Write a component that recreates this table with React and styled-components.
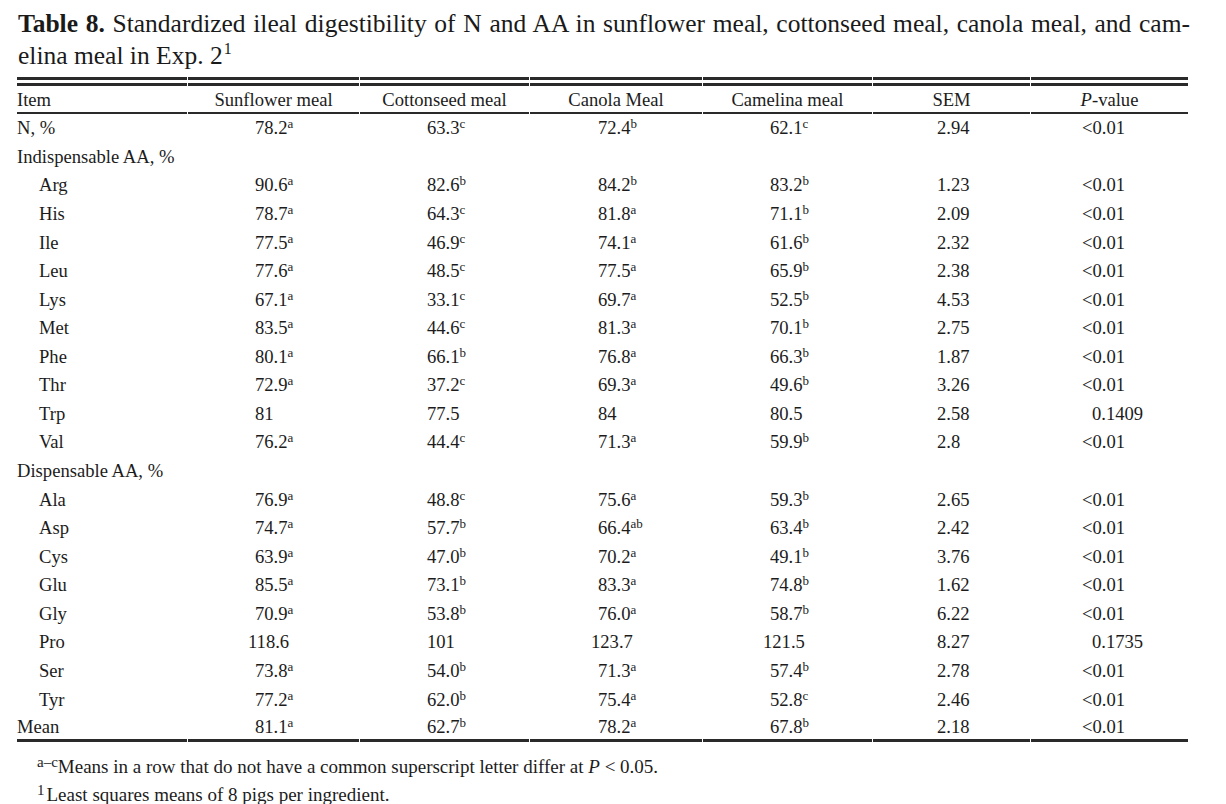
import React from 'react'
import styled, { createGlobalStyle } from 'styled-components'

const GlobalStyle = createGlobalStyle`
  body {
    margin: 0;
    background: #ffffff;
    font-family: "Liberation Serif", "Times New Roman", serif;
    color: #1c1c1c;
  }
`

const COLS = [170, 171, 169, 172, 169, 157, 157]
const PADS = [0, 67, 67, 68, 67, 64, 51]

const HEADERS = ['Item', 'Sunflower meal', 'Cottonseed meal', 'Canola Meal', 'Camelina meal', 'SEM']

const ROWS = [
    { label: 'N, %', values: ['78.2a', '63.3c', '72.4b', '62.1c', '2.94', '<0.01'] },
    { label: 'Indispensable AA, %', section: true },
    { label: 'Arg', sub: true, values: ['90.6a', '82.6b', '84.2b', '83.2b', '1.23', '<0.01'] },
    { label: 'His', sub: true, values: ['78.7a', '64.3c', '81.8a', '71.1b', '2.09', '<0.01'] },
    { label: 'Ile', sub: true, values: ['77.5a', '46.9c', '74.1a', '61.6b', '2.32', '<0.01'] },
    { label: 'Leu', sub: true, values: ['77.6a', '48.5c', '77.5a', '65.9b', '2.38', '<0.01'] },
    { label: 'Lys', sub: true, values: ['67.1a', '33.1c', '69.7a', '52.5b', '4.53', '<0.01'] },
    { label: 'Met', sub: true, values: ['83.5a', '44.6c', '81.3a', '70.1b', '2.75', '<0.01'] },
    { label: 'Phe', sub: true, values: ['80.1a', '66.1b', '76.8a', '66.3b', '1.87', '<0.01'] },
    { label: 'Thr', sub: true, values: ['72.9a', '37.2c', '69.3a', '49.6b', '3.26', '<0.01'] },
    { label: 'Trp', sub: true, values: ['81', '77.5', '84', '80.5', '2.58', '0.1409'] },
    { label: 'Val', sub: true, values: ['76.2a', '44.4c', '71.3a', '59.9b', '2.8', '<0.01'] },
    { label: 'Dispensable AA, %', section: true },
    { label: 'Ala', sub: true, values: ['76.9a', '48.8c', '75.6a', '59.3b', '2.65', '<0.01'] },
    { label: 'Asp', sub: true, values: ['74.7a', '57.7b', '66.4ab', '63.4b', '2.42', '<0.01'] },
    { label: 'Cys', sub: true, values: ['63.9a', '47.0b', '70.2a', '49.1b', '3.76', '<0.01'] },
    { label: 'Glu', sub: true, values: ['85.5a', '73.1b', '83.3a', '74.8b', '1.62', '<0.01'] },
    { label: 'Gly', sub: true, values: ['70.9a', '53.8b', '76.0a', '58.7b', '6.22', '<0.01'] },
    { label: 'Pro', sub: true, values: ['118.6', '101', '123.7', '121.5', '8.27', '0.1735'] },
    { label: 'Ser', sub: true, values: ['73.8a', '54.0b', '71.3a', '57.4b', '2.78', '<0.01'] },
    { label: 'Tyr', sub: true, values: ['77.2a', '62.0b', '75.4a', '52.8c', '2.46', '<0.01'] },
    { label: 'Mean', values: ['81.1a', '62.7b', '78.2a', '67.8b', '2.18', '<0.01'] },
]

function splitValue(v) {
    const m = v.match(/^([<\d.]+)([a-z]*)$/)
    return m ? [m[1], m[2]] : [v, '']
}

// three-digit means sit a little to the left, long p-values a little to the right
function shiftFor(num) {
    if (/^\d{3}\./.test(num)) return -7
    if (/^0\.\d{4}$/.test(num)) return 10
    return 0
}

function App() {
    return (
        <Page>
            <GlobalStyle />
            <Title>
                <TitleLine $justify>
                    <b>Table 8.</b> Standardized ileal digestibility of N and AA in sunflower meal, cottonseed meal, canola meal, and cam-
                </TitleLine>
                <TitleLine>
                    elina meal in Exp. 2<TitleSup>1</TitleSup>
                </TitleLine>
            </Title>

            <Table>
                <colgroup>
                    {COLS.map((w, i) => <col key={i} style={{ width: w }} />)}
                </colgroup>
                <thead>
                    <tr>
                        {HEADERS.map((h, i) => (
                            <Head key={h} $left={i === 0}>{h}</Head>
                        ))}
                        <Head><i>P</i>-value</Head>
                    </tr>
                </thead>
                <tbody>
                    {ROWS.map((row, r) => (
                        <Row key={row.label} $last={r === ROWS.length - 1}>
                            <Label $indent={row.sub}>{row.label}</Label>
                            {row.section
                                ? <Cell colSpan={6} />
                                : row.values.map((v, c) => {
                                    const [num, letters] = splitValue(v)
                                    return (
                                        <Cell key={c} $pad={PADS[c + 1] + shiftFor(num)}>
                                            {num}{letters && <Sup>{letters}</Sup>}
                                        </Cell>
                                    )
                                })}
                        </Row>
                    ))}
                </tbody>
            </Table>

            <Notes>
                <Note><NoteSup $gap={0}>a–c</NoteSup>Means in a row that do not have a common superscript letter differ at <i>P</i> &lt; 0.05.</Note>
                <Note><NoteSup $gap={2}>1</NoteSup>Least squares means of 8 pigs per ingredient.</Note>
            </Notes>
        </Page>
    )
}

export default App

const Page = styled.div`
    width: 1226px;
    height: 804px;
    box-sizing: border-box;
    padding: 8px 0 0 17px;
    overflow: hidden;
`

const Title = styled.div`
    width: 1172px;
    margin-left: 1px;
    font-size: 25.5px;
    line-height: 32px;
    color: #1a1a1a;
`

const TitleLine = styled.div`
    white-space: nowrap;
    text-align: ${props => props.$justify ? 'justify' : 'left'};
    text-align-last: ${props => props.$justify ? 'justify' : 'left'};

    b {
        font-weight: bold;
    }
`

const TitleSup = styled.sup`
    font-size: 16px;
    line-height: 0;
    vertical-align: 10px;
    margin-left: 1px;
`

const Table = styled.table`
    margin: 5px 0 0 -1px;
    table-layout: fixed;
    width: 1173px;
    border-collapse: separate;
    border-spacing: 1px 0;
    font-size: 18.6px;
`

const Head = styled.th`
    font-weight: normal;
    text-align: ${props => props.$left ? 'left' : 'center'};
    padding: 1px 0 0 0;
    height: 25px;
    white-space: nowrap;
    border-top: 9px double #2a2a2a;
    border-bottom: 2px solid #2a2a2a;
    line-height: 22px;

    i {
        font-style: italic;
    }
`

const Row = styled.tr`
    height: 28.57px;

    td {
        border-bottom: ${props => props.$last ? '3px solid #2a2a2a' : 'none'};
    }
`

const Label = styled.td`
    padding: 0 0 0 ${props => props.$indent ? '22px' : '0'};
    white-space: nowrap;
    line-height: 22px;
`

const Cell = styled.td`
    padding: 0 0 0 ${props => props.$pad || 0}px;
    white-space: nowrap;
    line-height: 22px;
`

const Sup = styled.sup`
    font-size: 13px;
    line-height: 0;
    vertical-align: 6px;
`

const Notes = styled.div`
    margin-top: 11px;
    padding-left: 20px;
    font-size: 19px;
    line-height: 28px;
`

const Note = styled.div`
    white-space: nowrap;

    i {
        font-style: italic;
    }
`

const NoteSup = styled.sup`
    font-size: 15px;
    line-height: 0;
    vertical-align: 6px;
    margin-right: ${props => props.$gap}px;
`
